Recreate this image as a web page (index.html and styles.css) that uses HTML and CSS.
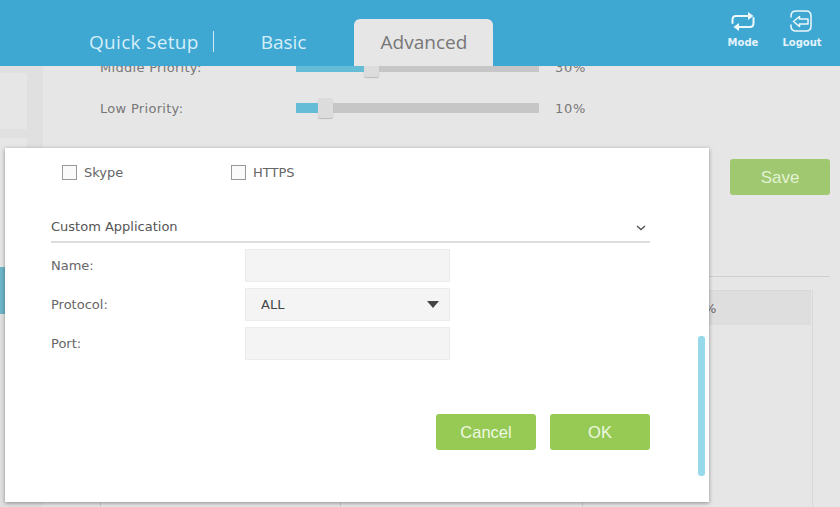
FILE: index.html
```html
<!DOCTYPE html>
<html lang="en">
<head>
<meta charset="utf-8">
<title>Advanced</title>
<link rel="stylesheet" href="styles.css">
</head>
<body>
<header class="top">
  <nav class="tabs">
    <a class="tab tab-quick">Quick Setup</a>
    <a class="tab tab-basic">Basic</a>
    <a class="tab tab-active">Advanced</a>
  </nav>
  <div class="tools">
    <a class="tool">
      <svg class="tool-icon" width="26" height="24" viewBox="0 0 26 24" fill="none" stroke="#eef8fc" stroke-width="2" stroke-linecap="round">
        <path d="M2.5 13V9.5Q2.5 6 6 6H19"/><path d="M18 2l5.5 4-5.5 4z" fill="#eef8fc" stroke="none"/>
        <path d="M23.5 8V13Q23.5 17 20 17H8"/><path d="M9 13l-5.5 4 5.5 4z" fill="#eef8fc" stroke="none"/>
      </svg>
      <span>Mode</span>
    </a>
    <a class="tool">
      <svg class="tool-icon" width="26" height="24" viewBox="0 0 26 24" fill="none" stroke="#eef8fc" stroke-width="1.5" stroke-linejoin="round" stroke-linecap="round">
        <path d="M2 7V6Q2 1 7 1H17Q22 1 22 6V16Q22 21 17 21H7Q2 21 2 16V15"/>
        <path d="M4.5 11.5L10.5 6.5V9H19V14H10.5V16.5Z"/>
      </svg>
      <span>Logout</span>
    </a>
  </div>
</header>
<div class="page">
  <aside class="side">
    <div class="side-item"></div>
    <div class="side-item side-tall"></div>
    <div class="side-current"></div>
  </aside>
  <main class="main">
    <div class="slider-row slider-cut">
      <span class="slider-label">Middle Priority:</span>
      <span class="track"><span class="fill fill-30"></span><span class="thumb"></span></span>
      <span class="pct">30%</span>
    </div>
    <div class="slider-row">
      <span class="slider-label">Low Priority:</span>
      <span class="track"><span class="fill fill-10"></span><span class="thumb"></span></span>
      <span class="pct">10%</span>
    </div>
    <div class="save-row"><button class="btn btn-save">Save</button></div>
    <div class="rule"></div>
    <div class="table">
      <div class="col"><div class="col-head"></div></div>
      <div class="col"><div class="col-head"></div></div>
      <div class="col"><div class="col-head col-pct">%</div></div>
    </div>
  </main>
</div>
<section class="modal">
  <div class="modal-body">
    <div class="checks">
      <label class="check"><span class="box"></span>Skype</label>
      <label class="check"><span class="box"></span>HTTPS</label>
    </div>
    <div class="custom-head">
      <span>Custom Application</span>
      <svg class="chevron" width="10" height="6" viewBox="0 0 10 6" fill="none" stroke="#555" stroke-width="1.4"><path d="M1 1l4 3.5L9 1"/></svg>
    </div>
    <div class="form-row"><span class="form-label">Name:</span><span class="field"></span></div>
    <div class="form-row"><span class="form-label">Protocol:</span><span class="field field-select">ALL<i class="caret"></i></span></div>
    <div class="form-row"><span class="form-label">Port:</span><span class="field"></span></div>
    <div class="actions">
      <button class="btn btn-ok">Cancel</button>
      <button class="btn btn-ok">OK</button>
    </div>
  </div>
  <div class="scrollbar"></div>
</section>
</body>
</html>
```
FILE: styles.css
```css
* { box-sizing: border-box; }
html, body { margin: 0; height: 507px; overflow: hidden; }
body { background: #e6e6e6; font-family: "DejaVu Sans", sans-serif; color: #666; font-size: 13px; }

.top { position: relative; z-index: 2; height: 66px; background: #3ea8d3; display: flex; justify-content: space-between; }
.tabs { display: flex; align-items: flex-end; padding-left: 89px; }
.tab { font-family: "Open Sans", sans-serif; font-size: 19px; color: #d6eef8; height: 47px; line-height: 47px; }
.tab-quick { padding-right: 15px; position: relative; letter-spacing: .3px; }
.tab-quick::after { content: ""; position: absolute; right: 0; top: 12px; height: 21px; width: 1px; background: #cfeaf6; }
.tab-basic { margin-left: 47px; }
.tab-active { margin-left: 48px; width: 139px; text-align: center; background: #e6e6e6; color: #777; border-radius: 6px 6px 0 0; }
.tools { display: flex; gap: 15px; padding: 10px 16px 0 0; }
.tool { display: flex; flex-direction: column; align-items: center; width: 44px; color: #e4f3fa; font-size: 10px; font-weight: bold; }
.tool-icon { display: block; margin-bottom: 3px; }

.page { display: flex; height: 441px; overflow: hidden; }
.side { width: 43px; flex: none; background: #e0e0e0; padding-right: 16px; position: relative; }
.side-item { height: 56px; margin-top: 7px; background: #e6e6e6; }
.side-tall { height: 129px; margin-top: 9px; }
.side-current { height: 47px; width: 5px; background: #6db5cb; }

.main { flex: 1; min-width: 0; }
.slider-row { display: flex; align-items: center; height: 20px; margin-top: 21px; padding-left: 57px; letter-spacing: .3px; color: #777; }
.slider-cut { margin-top: -9px; }
.slider-label { width: 196px; }
.track { position: relative; display: block; width: 243px; height: 10px; background: #c6c6c6; }
.fill { display: block; height: 100%; background: #65bcd7; }
.fill-30 { width: 75px; }
.fill-10 { width: 30px; }
.thumb { position: absolute; top: -5px; width: 15px; height: 20px; background: #dcdcdc; border-radius: 2px; box-shadow: 0 1px 1px #bbb; }
.fill-30 + .thumb { left: 68px; }
.fill-10 + .thumb { left: 22px; }
.pct { margin-left: 16px; letter-spacing: .7px; }

.save-row { display: flex; justify-content: flex-end; padding-right: 10px; margin-top: 41px; }
.btn { border: 0; border-radius: 3px; font-family: "Liberation Sans", sans-serif; color: #e3f2d2; width: 100px; height: 36px; font-size: 17px; padding: 1px 0 0; }
.btn-save { background: #9fc871; }
.btn-ok { background: #96ca55; color: #eef8e2; font-size: 16.5px; }
.rule { height: 1px; background: #cfcfcf; margin: 81px 10px 0 0; }
.table { display: grid; grid-template-columns: 240px 242px 231px; margin: 13px 0 0 57px; width: 713px; height: 230px; border: solid #d8d8d8; border-width: 1px 1px 0 0; }
.col { border-left: 1px solid #cfcfcf; }
.col-head { height: 34px; background: #dedede; line-height: 36px; }
.col-pct { padding-left: 121px; margin-right: 2px; }

.modal { position: absolute; z-index: 3; left: 5px; top: 148px; width: 704px; height: 354px; background: #fff; box-shadow: 0 1px 4px rgba(0,0,0,.4); }
.modal-body { padding: 0 59px 0 46px; }
.checks { display: flex; padding: 15px 0 0 11px; height: 50px; }
.check { display: flex; align-items: center; height: 18px; width: 169px; gap: 7px; }
.box { width: 15px; height: 15px; border: 1px solid #999; background: #fafafa; }
.custom-head { display: flex; justify-content: space-between; align-items: center; height: 45px; padding-top: 14px; border-bottom: 2px solid #ddd; color: #555; }
.chevron { margin: 3px 4px 0 0; }
.form-row { display: flex; align-items: center; margin-top: 6px; height: 33px; }
.form-row + .form-row { margin-top: 6px; }
.form-label { width: 194px; }
.field { width: 205px; height: 33px; background: #f4f4f4; border: 1px solid #ececec; display: flex; align-items: center; justify-content: space-between; padding: 0 10px 0 15px; color: #444; }
.caret { width: 0; height: 0; border: 6px solid transparent; border-top: 7px solid #444; border-bottom: 0; }
.actions { display: flex; justify-content: flex-end; gap: 14px; margin-top: 54px; }
.scrollbar { position: absolute; left: 693px; top: 188px; width: 7px; height: 140px; border-radius: 3px; background: #96d9ea; }
```
